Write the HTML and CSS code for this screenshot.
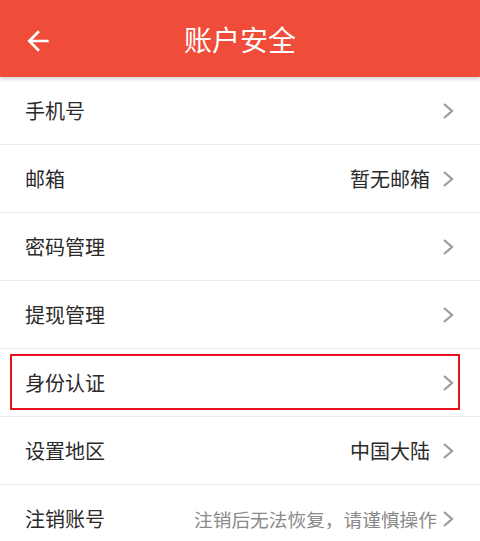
FILE: index.html
```html
<!DOCTYPE html>
<html lang="zh">
<head>
<meta charset="utf-8">
<link rel="stylesheet" href="styles.css">
</head>
<body>
<header class="topbar">
  <svg class="back" viewBox="0 0 24 24" width="32" height="32"><path d="M20 11H7.83l5.59-5.59L12 4l-8 8 8 8 1.41-1.41L7.83 13H20v-2z" fill="#fff"/></svg>
  <h1 class="title">账户安全</h1>
</header>
<ul class="list">
  <li class="row"><span class="label">手机号</span><span class="right"><svg class="chev" viewBox="0 0 12 18" width="12" height="18"><polyline points="2,2 10,9 2,16" fill="none" stroke="#9b9b9b" stroke-width="2.2"/></svg></span></li>
  <li class="row"><span class="label">邮箱</span><span class="right"><span class="value">暂无邮箱</span><svg class="chev" viewBox="0 0 12 18" width="12" height="18"><polyline points="2,2 10,9 2,16" fill="none" stroke="#9b9b9b" stroke-width="2.2"/></svg></span></li>
  <li class="row"><span class="label">密码管理</span><span class="right"><svg class="chev" viewBox="0 0 12 18" width="12" height="18"><polyline points="2,2 10,9 2,16" fill="none" stroke="#9b9b9b" stroke-width="2.2"/></svg></span></li>
  <li class="row"><span class="label">提现管理</span><span class="right"><svg class="chev" viewBox="0 0 12 18" width="12" height="18"><polyline points="2,2 10,9 2,16" fill="none" stroke="#9b9b9b" stroke-width="2.2"/></svg></span></li>
  <li class="row highlighted"><span class="label">身份认证</span><span class="right"><svg class="chev" viewBox="0 0 12 18" width="12" height="18"><polyline points="2,2 10,9 2,16" fill="none" stroke="#9b9b9b" stroke-width="2.2"/></svg></span></li>
  <li class="row"><span class="label">设置地区</span><span class="right"><span class="value">中国大陆</span><svg class="chev" viewBox="0 0 12 18" width="12" height="18"><polyline points="2,2 10,9 2,16" fill="none" stroke="#9b9b9b" stroke-width="2.2"/></svg></span></li>
  <li class="row"><span class="label">注销账号</span><span class="right"><span class="hint">注销后无法恢复，请谨慎操作</span><svg class="chev" viewBox="0 0 12 18" width="12" height="18"><polyline points="2,2 10,9 2,16" fill="none" stroke="#9b9b9b" stroke-width="2.2"/></svg></span></li>
</ul>
</body>
</html>
```
FILE: styles.css
```css
html, body {
  margin: 0;
  padding: 0;
  background: #fff;
  font-family: "Noto Sans CJK SC", "Noto Sans", sans-serif;
  overflow: hidden;
}
.topbar {
  position: relative;
  z-index: 1;
  height: 77px;
  background: #ef4c3a;
  display: flex;
  align-items: center;
  justify-content: center;
  box-shadow: 0 2px 4px rgba(0,0,0,0.18);
}
.back {
  position: absolute;
  left: 22px;
  top: 25px;
}
.title {
  margin: 0;
  color: #fff;
  font-size: 28px;
  font-weight: 400;
}
.list {
  list-style: none;
  margin: 0;
  padding: 0;
}
.row {
  position: relative;
  height: 67px;
  border-bottom: 1px solid #ebebeb;
  display: flex;
  align-items: center;
  justify-content: space-between;
  padding: 0 26px 0 25px;
}
.label {
  font-size: 20px;
  color: #2a2a2a;
}
.right {
  display: flex;
  align-items: center;
}
.value {
  font-size: 20px;
  color: #2a2a2a;
  margin-right: 12px;
}
.hint {
  font-size: 18.7px;
  color: #8a8a8a;
  margin-right: 5px;
}
.chev {
  display: block;
}
.highlighted::after {
  content: "";
  position: absolute;
  left: 10px;
  right: 20px;
  top: 5px;
  bottom: 6px;
  border: 2px solid #e8121d;
}
```
